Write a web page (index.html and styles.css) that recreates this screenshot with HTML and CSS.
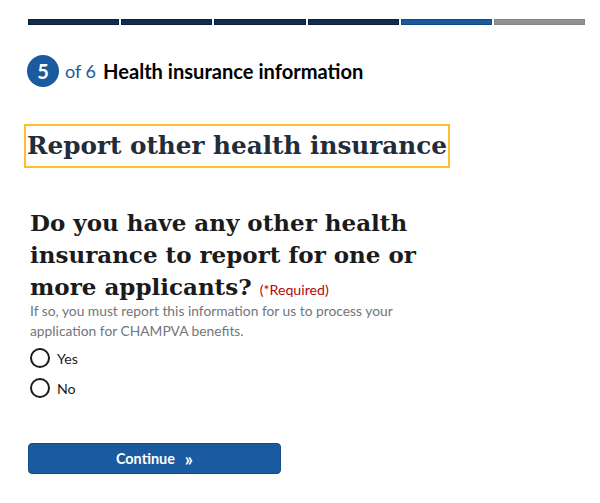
FILE: index.html
```html
<!DOCTYPE html>
<html lang="en">
<head>
<meta charset="utf-8">
<title>Report other health insurance</title>
<link rel="stylesheet" href="styles.css">
</head>
<body>
<main class="page">
  <div class="progress" aria-hidden="true">
    <span class="seg done"></span>
    <span class="seg done"></span>
    <span class="seg done"></span>
    <span class="seg done"></span>
    <span class="seg current"></span>
    <span class="seg todo"></span>
  </div>
  <h2 class="step">
    <span class="step-num">5</span>
    <span class="step-of">of 6</span>
    <span class="step-title">Health insurance information</span>
  </h2>
  <div class="title-wrap">
    <h3 class="title">Report other health insurance</h3>
  </div>
  <fieldset class="question">
    <legend class="q-legend">Do you have any other health insurance to report for one or more applicants? <span class="required">(*Required)</span></legend>
    <p class="hint">If so, you must report this information for us to process your application for CHAMPVA benefits.</p>
    <label class="radio"><span class="circle"></span><span class="radio-label">Yes</span></label>
    <label class="radio"><span class="circle"></span><span class="radio-label">No</span></label>
  </fieldset>
  <button class="continue" type="button">Continue <span class="chev">&raquo;</span></button>
</main>
</body>
</html>
```

FILE: styles.css
```css
* { box-sizing: border-box; }
html, body { margin: 0; padding: 0; background: #fff; }
body {
  font-family: "Lato", "Open Sans", sans-serif;
  color: #1b1b1b;
}
.page {
  padding: 19px 15px 0 28px;
  display: flex;
  flex-direction: column;
}
.progress {
  display: flex;
  gap: 2px;
  height: 6px;
}
.seg {
  flex: 1;
  height: 6px;
}
.seg.done { background: #112e51; box-shadow: inset 0 0 0 1px #0b1f3a; }
.seg.current { background: #1a5a9e; box-shadow: inset 0 0 0 1px #124a85; }
.seg.todo { background: #919191; box-shadow: inset 0 0 0 1px #858585; }

.step {
  margin: 30px 0 0 0;
  display: flex;
  align-items: center;
  height: 32px;
  font-weight: normal;
}
.step-num {
  width: 32px;
  height: 32px;
  border-radius: 50%;
  background: #1a5a9e;
  color: #fff;
  font-size: 20px;
  font-weight: 700;
  display: flex;
  align-items: center;
  justify-content: center;
  margin-left: -1px;
}
.step-of {
  color: #1a5a9e;
  font-size: 18px;
  margin-left: 6px;
}
.step-title {
  font-size: 20.1px;
  font-weight: 700;
  margin-left: 7px;
  color: #000;
}
.title-wrap {
  margin-top: 38px;
  margin-left: -3px;
  display: flex;
}
.title {
  margin: 0;
  padding: 2px;
  outline: 2px solid #ffbe2e;
  outline-offset: -1px;
  font-family: "DejaVu Serif", serif;
  font-weight: 700;
  font-size: 24.7px;
  line-height: 38px;
  color: #232c3a;
}
.question {
  border: 0;
  margin: 40px 0 0 0;
  padding: 0;
  min-width: 0;
}
.q-legend {
  padding: 0;
  margin: 0 0 0 2px;
  max-width: 400px;
  font-family: "DejaVu Serif", serif;
  font-weight: 700;
  font-size: 23px;
  line-height: 32px;
  color: #1b1b1b;
}
.required {
  font-family: "Lato", sans-serif;
  font-weight: normal;
  font-size: 14.2px;
  line-height: 1;
  color: #b50909;
}
.hint {
  margin: -2px 0 0 2px;
  font-size: 13.8px;
  line-height: 20px;
  color: #71767a;
  max-width: 400px;
}
.radio {
  display: flex;
  align-items: center;
  margin-top: 6px;
  height: 22px;
  margin-left: 2px;
}
.radio + .radio { margin-top: 8px; }
.circle {
  width: 20px;
  height: 20px;
  border: 2px solid #1b1b1b;
  border-radius: 50%;
}
.radio-label {
  font-size: 14.2px;
  margin-left: 7px;
}
.continue {
  margin-top: 44px;
  width: 253px;
  height: 31px;
  border: 1px solid #144c86;
  border-radius: 4px;
  background: #1a5a9e;
  color: #fff;
  font-family: "Lato", sans-serif;
  font-weight: 700;
  font-size: 14.4px;
  display: flex;
  align-items: center;
  justify-content: center;
  padding: 0;
}
.chev { margin-left: 10px; font-size: 18px; line-height: 1; }
```
